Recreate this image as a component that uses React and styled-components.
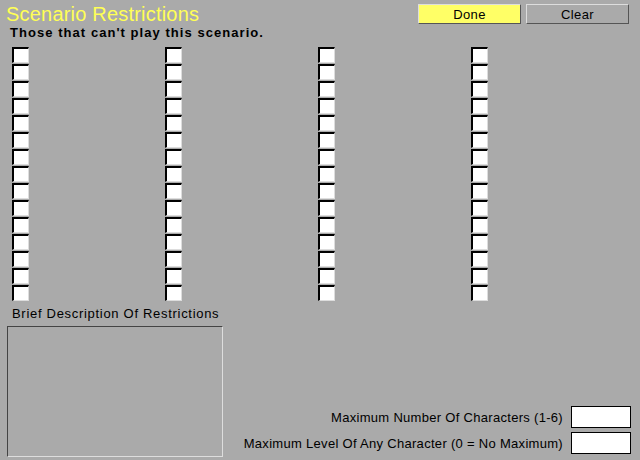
import React from "react";
import styled, { createGlobalStyle } from "styled-components";

const GlobalStyle = createGlobalStyle`
  html, body {
    margin: 0;
    padding: 0;
    background: #aaaaaa;
  }
  body {
    width: 640px;
    height: 460px;
    overflow: hidden;
    font-family: "Liberation Sans", Arial, sans-serif;
  }
`;

const COLUMNS = 4;
const ROWS = 15;

const App = () => {
  return (
    <>
      <GlobalStyle />
      <Page>
        <Header>
          <Title>Scenario Restrictions</Title>
          <ButtonRow>
            <Button $primary>Done</Button>
            <Button>Clear</Button>
          </ButtonRow>
        </Header>
        <Subtitle>Those that can't play this scenario.</Subtitle>
        <BoxGrid>
          {Array.from({ length: COLUMNS }).map((_, c) => (
            <BoxColumn key={c}>
              {Array.from({ length: ROWS }).map((_, r) => (
                <CheckBox key={r} />
              ))}
            </BoxColumn>
          ))}
        </BoxGrid>
        <Bottom>
          <DescriptionBlock>
            <Label $wide>Brief Description Of Restrictions</Label>
            <DescriptionArea />
          </DescriptionBlock>
          <Limits>
            <LimitRow>
              <Label>Maximum Number Of Characters (1-6)</Label>
              <NumberField />
            </LimitRow>
            <LimitRow>
              <Label>Maximum Level Of Any Character (0 = No Maximum)</Label>
              <NumberField />
            </LimitRow>
          </Limits>
        </Bottom>
      </Page>
    </>
  );
};

export default App;

const Page = styled.div`
  display: flex;
  flex-direction: column;
  width: 640px;
  height: 460px;
  box-sizing: border-box;
`;

const Header = styled.div`
  display: flex;
  justify-content: space-between;
  align-items: flex-start;
  height: 26px;
  padding: 0 11px 0 6px;
`;

const Title = styled.div`
  color: #ffff55;
  font-size: 20px;
  line-height: 28px;
  letter-spacing: 0.2px;
`;

const ButtonRow = styled.div`
  display: flex;
  gap: 5px;
  margin-top: 4px;
`;

const Button = styled.div`
  width: 103px;
  height: 20px;
  box-sizing: border-box;
  display: flex;
  align-items: center;
  justify-content: center;
  font-size: 13px;
  letter-spacing: 0.4px;
  color: #000;
  background: ${(p) => (p.$primary ? "#ffff66" : "#aaaaaa")};
  border-top: 1px solid #dddddd;
  border-left: 1px solid #dddddd;
  border-right: 1px solid #555555;
  border-bottom: 1px solid #555555;
`;

const Subtitle = styled.div`
  margin-left: 10px;
  font-size: 13px;
  font-weight: bold;
  line-height: 14px;
  letter-spacing: 1.05px;
`;

const BoxGrid = styled.div`
  display: grid;
  grid-template-columns: repeat(4, 153px);
  padding-left: 12px;
  margin-top: 7px;
`;

const BoxColumn = styled.div`
  display: flex;
  flex-direction: column;
  gap: 1px;
`;

const CheckBox = styled.div`
  width: 17px;
  height: 16px;
  box-sizing: border-box;
  background: #ffffff;
  border-top: 2px solid #000000;
  border-left: 2px solid #000000;
  border-right: 1px solid #dddddd;
  border-bottom: 1px solid #dddddd;
`;

const Bottom = styled.div`
  display: flex;
  flex: 1;
  padding: 5px 9px 4px 7px;
`;

const DescriptionBlock = styled.div`
  display: flex;
  flex-direction: column;
`;

const Label = styled.div`
  font-size: 13px;
  line-height: 15px;
  color: #000;
  letter-spacing: ${(p) => (p.$wide ? "0.7px" : "0.3px")};
  margin-left: ${(p) => (p.$wide ? "5px" : "0")};
  white-space: nowrap;
`;

const DescriptionArea = styled.div`
  margin-top: 5px;
  width: 216px;
  height: 131px;
  box-sizing: border-box;
  border-top: 1px solid #444444;
  border-left: 1px solid #444444;
  border-right: 1px solid #dddddd;
  border-bottom: 1px solid #dddddd;
`;

const Limits = styled.div`
  flex: 1;
  display: flex;
  flex-direction: column;
  justify-content: flex-end;
  align-items: flex-end;
  gap: 4px;
  padding-bottom: 3px;
`;

const LimitRow = styled.div`
  display: flex;
  align-items: center;
  gap: 8px;
`;

const NumberField = styled.div`
  width: 60px;
  height: 22px;
  box-sizing: border-box;
  background: #ffffff;
  border: 1px solid #000000;
`;
